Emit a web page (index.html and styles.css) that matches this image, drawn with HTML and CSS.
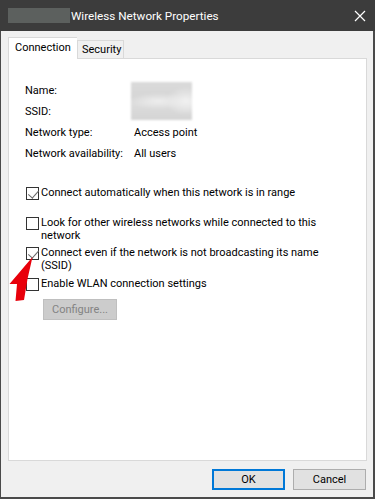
FILE: index.html
```html
<!DOCTYPE html>
<html>
<head>
<meta charset="utf-8">
<link rel="stylesheet" href="styles.css">
</head>
<body>
<div class="window">
  <div class="titlebar">
    <div class="title-blur"></div>
    <div class="title">Wireless Network Properties</div>
    <svg class="close" width="12" height="12" viewBox="0 0 12 12"><path d="M1 1 L11 11 M11 1 L1 11" stroke="#fff" stroke-width="1.2" fill="none"/></svg>
  </div>
  <div class="client">
    <div class="tabs">
      <div class="tab active">Connection</div>
      <div class="tab">Security</div>
    </div>
    <div class="panel">
      <div class="info">
        <div class="lbl">Name:</div>
        <div class="val-blur"></div>
        <div class="lbl">SSID:</div>
        <div class="lbl">Network type:</div>
        <div class="val">Access point</div>
        <div class="lbl">Network availability:</div>
        <div class="val">All users</div>
      </div>
      <div class="chk first">
        <span class="box checked"></span>
        <span class="txt">Connect automatically when this network is in range</span>
      </div>
      <div class="chk second">
        <span class="box"></span>
        <span class="txt">Look for other wireless networks while connected to this network</span>
      </div>
      <div class="chk third">
        <span class="box checked"></span>
        <span class="txt">Connect even if the network is not broadcasting its name (SSID)</span>
      </div>
      <div class="chk fourth">
        <span class="box"></span>
        <span class="txt">Enable WLAN connection settings</span>
      </div>
      <div class="configure">Configure...</div>
      <svg class="arrow" width="40" height="54" viewBox="0 0 40 54"><polygon points="32.5,7 27.5,29 24,50 15.5,51 17,34 9.5,34" fill="#e8000b"/></svg>
    </div>
    <div class="buttons">
      <div class="btn default">OK</div>
      <div class="btn">Cancel</div>
    </div>
  </div>
</div>
</body>
</html>
```
FILE: styles.css
```css
* { box-sizing: border-box; }
html, body { margin: 0; padding: 0; }
body {
  width: 375px;
  height: 499px;
  overflow: hidden;
  font-family: Roboto, "Liberation Sans", sans-serif;
  font-size: 11px;
  color: #000;
}
.window {
  width: 375px;
  height: 499px;
  background: #f0f0f0;
  border-left: 1px solid #4a4a4a;
  border-right: 2px solid #4a4a4a;
  border-bottom: 2px solid #4a4a4a;
  display: flex;
  flex-direction: column;
}
.titlebar {
  height: 31px;
  background: #3c3c3c;
  display: flex;
  align-items: center;
  position: relative;
  margin-right: -2px;
  margin-left: -1px;
}
.title-blur {
  width: 62px;
  height: 15px;
  margin-left: 8px;
  background: #5c605e;
  filter: blur(0.6px);
}
.title {
  color: #fff;
  margin-left: 1px;
  font-size: 11.7px;
  line-height: 16px;
  margin-top: 1px;
}
.close {
  position: absolute;
  left: 354px;
  top: 9.5px;
}
.client {
  flex: 1;
  padding: 7px 7px 0 7px;
  display: flex;
  flex-direction: column;
}
.tabs {
  display: flex;
  align-items: flex-end;
  height: 20px;
  position: relative;
  z-index: 2;
}
.tab {
  border: 1px solid #d9d9d9;
  border-bottom: none;
  background: #f0f0f0;
  height: 18px;
  line-height: 17px;
}
.tab.active {
  background: #fff;
  height: 22px;
  margin-bottom: -1px;
  padding: 0 0 0 6px;
  line-height: 20px;
  border-right: none;
  width: 69px;
}
.tab:not(.active) {
  width: 47px;
  padding-left: 4px;
}
.panel {
  background: #fff;
  border: 1px solid #d9d9d9;
  height: 403px;
  width: 359px;
  padding: 21px 0 0 16px;
  display: flex;
  flex-direction: column;
  position: relative;
}
.info {
  display: grid;
  grid-template-columns: 109px auto;
  grid-auto-rows: 21px;
  align-items: center;
}
.lbl { grid-column: 1; }
.val { grid-column: 2; }
.val-blur {
  grid-column: 2;
  grid-row: 1 / span 2;
  align-self: start;
  margin: 2px 0 0 -3px;
  width: 61px;
  height: 38px;
  background:
    radial-gradient(ellipse 30px 8px at 45% 50%, #eeeeee 0%, rgba(238,238,238,0) 100%),
    radial-gradient(ellipse 20px 14px at 90% 50%, #f2f2f2 0%, rgba(242,242,242,0) 100%),
    linear-gradient(#dadada, #d6d6d6 40%, #dcdcdc 60%, #d4d4d4);
  filter: blur(1px);
}
.chk {
  display: flex;
  align-items: flex-start;
  margin-left: 1px;
  line-height: 13px;
}
.chk.first { margin-top: 22px; }
.chk.second { margin-top: 16px; }
.chk.third { margin-top: 4px; }
.chk.fourth { margin-top: 5px; }
.txt { margin-left: 2px; width: 282px; }
.box {
  flex: none;
  width: 13px;
  height: 13px;
  margin-top: 1px;
  border: 1px solid #333;
  background: #fff;
  position: relative;
}
.box.checked::after {
  content: "";
  position: absolute;
  left: 1px;
  top: 1px;
  width: 9px;
  height: 5px;
  border-left: 1.3px solid #6a6a6a;
  border-bottom: 1.3px solid #6a6a6a;
  transform: translate(0.5px, 1px) rotate(-48deg);
  transform-origin: 50% 50%;
}
.configure {
  margin: 8px 0 0 18px;
  width: 74px;
  height: 21px;
  background: #cccccc;
  border: 1px solid #bfbfbf;
  color: #838383;
  text-align: center;
  line-height: 19px;
}
.arrow {
  position: absolute;
  left: -9px;
  top: 191px;
}
.buttons {
  display: flex;
  justify-content: flex-end;
  gap: 8px;
  margin-top: 8px;
}
.btn {
  width: 73px;
  height: 21px;
  background: #e1e1e1;
  border: 1px solid #adadad;
  text-align: center;
  line-height: 19px;
}
.btn.default {
  border: 2px solid #0078d7;
  line-height: 17px;
}
```
